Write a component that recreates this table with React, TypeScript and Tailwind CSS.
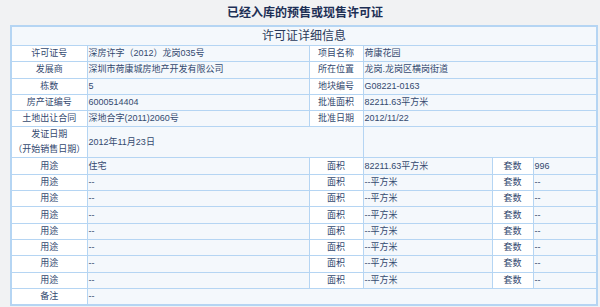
const FONT = { fontFamily: '"Liberation Sans", "Noto Sans CJK SC", sans-serif' };

const usageRows = [
  { use: "住宅", area: "82211.63平方米", sets: "996" },
  { use: "--", area: "--平方米", sets: "--" },
  { use: "--", area: "--平方米", sets: "--" },
  { use: "--", area: "--平方米", sets: "--" },
  { use: "--", area: "--平方米", sets: "--" },
  { use: "--", area: "--平方米", sets: "--" },
  { use: "--", area: "--平方米", sets: "--" },
  { use: "--", area: "--平方米", sets: "--" },
];

const topRows = [
  ["许可证号", "深房许字（2012）龙岗035号", "项目名称", "荷康花园"],
  ["发展商", "深圳市荷康城房地产开发有限公司", "所在位置", "龙岗.龙岗区横岗街道"],
  ["栋数", "5", "地块编号", "G08221-0163"],
  ["房产证编号", "6000514404", "批准面积", "82211.63平方米"],
  ["土地出让合同", "深地合字(2011)2060号", "批准日期", "2012/11/22"],
];

function Label({ children }: { children: React.ReactNode }) {
  return (
    <td className="border border-[#b5d5f3] bg-white text-center h-[16.3px] p-0 leading-[13px]">
      {children}
    </td>
  );
}

function Value({
  children,
  colSpan,
}: {
  children?: React.ReactNode;
  colSpan?: number;
}) {
  return (
    <td
      colSpan={colSpan}
      className="border border-[#b5d5f3] bg-[#f4f8fc] text-left pl-px h-[16.3px] p-0 leading-[13px]"
    >
      {children}
    </td>
  );
}

export default function App() {
  return (
    <div
      className="w-[600px] h-[307px] bg-[#f1f2f3] pl-[10px] pr-[4px] overflow-hidden"
      style={FONT}
    >
      <h1 className="h-[25px] flex items-center justify-center text-[12px] font-bold text-[#1d2f55] pl-[4px]">
        已经入库的预售或现售许可证
      </h1>
      <table className="w-[586px] table-fixed border-collapse border-2 border-[#b5d5f3] text-[9px] text-[#33496f]">
        <colgroup>
          <col className="w-[76px]" />
          <col className="w-[222px]" />
          <col className="w-[54px]" />
          <col className="w-[129px]" />
          <col className="w-[41px]" />
          <col className="w-[64px]" />
        </colgroup>
        <tbody>
          <tr>
            <td
              colSpan={6}
              className="border border-[#b5d5f3] bg-[#f4f8fc] h-[19px] p-0 text-center text-[12px] text-[#2a3a5a]"
            >
              许可证详细信息
            </td>
          </tr>
          {topRows.map(([l1, v1, l2, v2]) => (
            <tr key={l1}>
              <Label>{l1}</Label>
              <Value>{v1}</Value>
              <Label>{l2}</Label>
              <Value colSpan={3}>{v2}</Value>
            </tr>
          ))}
          <tr>
            <td className="border border-[#b5d5f3] bg-white text-center h-[31px] p-0 leading-[15px]">
              发证日期
              <br />
              （开始销售日期）
            </td>
            <Value colSpan={2}>2012年11月23日</Value>
            <Value colSpan={3} />
          </tr>
          {usageRows.map((r, i) => (
            <tr key={i}>
              <Label>用途</Label>
              <Value>{r.use}</Value>
              <Label>面积</Label>
              <Value>{r.area}</Value>
              <Label>套数</Label>
              <Value>{r.sets}</Value>
            </tr>
          ))}
          <tr>
            <Label>备注</Label>
            <Value colSpan={5}>--</Value>
          </tr>
        </tbody>
      </table>
    </div>
  );
}
